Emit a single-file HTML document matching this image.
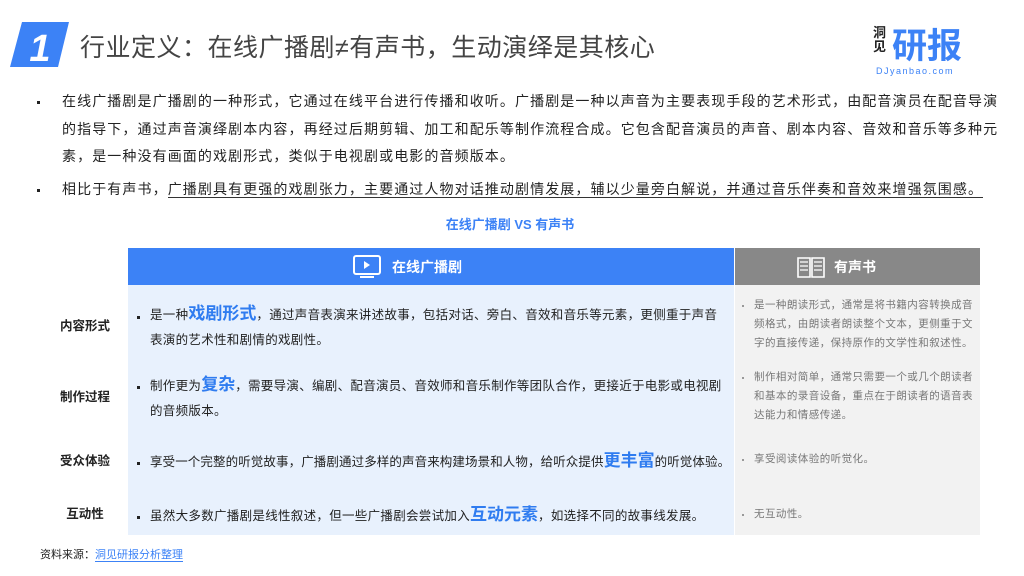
<!DOCTYPE html>
<html><head><meta charset="utf-8"><style>
*{margin:0;padding:0;box-sizing:border-box}
body{width:1024px;height:576px;background:#fff;position:relative;overflow:hidden;font-family:"Liberation Sans","Noto Sans CJK SC",sans-serif;color:#222}
.a{position:absolute;white-space:nowrap}
.p{position:absolute;left:62px;font-size:14px;line-height:27.5px;color:#222;white-space:nowrap;letter-spacing:1.1px}
.dot{position:absolute;left:37px;width:3px;height:3px;background:#222}
.lab{position:absolute;left:40px;width:90px;text-align:center;font-size:12.5px;font-weight:bold;color:#222}
.bt{position:absolute;left:150px;font-size:12.5px;line-height:24.5px;color:#222;white-space:nowrap;letter-spacing:0.3px}
.bt b{color:#2f7cf0;font-size:17px;font-weight:bold;letter-spacing:0}
.gt{position:absolute;left:754px;font-size:10.5px;line-height:19px;color:#777;white-space:nowrap;letter-spacing:0.45px}
.sd{position:absolute;width:3px;height:3px;background:#222}
.gd{position:absolute;left:742px;width:2px;height:2px;background:#999}
</style></head><body>
<svg class="a" style="left:8px;top:21px" width="62" height="48"><polygon points="14,1 61,1 50,46 2,46" fill="#3c82f6"/><text x="32" y="40" font-size="38" font-weight="bold" font-style="italic" fill="#fff" text-anchor="middle" font-family="Liberation Sans">1</text></svg>
<div class="a" style="left:80px;top:28px;font-size:25px;color:#444;letter-spacing:0.5px">行业定义：在线广播剧≠有声书，生动演绎是其核心</div>
<div class="a" style="left:873px;top:26px;font-size:13px;line-height:14px;font-weight:bold;color:#222;width:14px">洞<br>见</div>
<div class="a" style="left:892px;top:18px;font-size:35px;font-weight:bold;color:#3c82f6">研报</div>
<div class="a" style="left:876px;top:66px;font-size:9px;color:#3c82f6;letter-spacing:1.5px">DJyanbao.com</div>

<div class="dot" style="top:101px"></div>
<div class="p" style="top:88px">在线广播剧是广播剧的一种形式，它通过在线平台进行传播和收听。广播剧是一种以声音为主要表现手段的艺术形式，由配音演员在配音导演<br>的指导下，通过声音演绎剧本内容，再经过后期剪辑、加工和配乐等制作流程合成。它包含配音演员的声音、剧本内容、音效和音乐等多种元<br>素，是一种没有画面的戏剧形式，类似于电视剧或电影的音频版本。</div>
<div class="dot" style="top:189px"></div>
<div class="p" style="top:176px">相比于有声书，<span style="border-bottom:1.5px solid #333">广播剧具有更强的戏剧张力，主要通过人物对话推动剧情发展，辅以少量旁白解说，并通过音乐伴奏和音效来增强氛围感。</span></div>

<div class="a" style="left:0;width:1020px;text-align:center;top:214px;font-size:13px;font-weight:bold;color:#3c82f6">在线广播剧 VS 有声书</div>

<div class="a" style="left:128px;top:248px;width:606px;height:37px;background:#3c82f6"></div>
<div class="a" style="left:735px;top:248px;width:245px;height:37px;background:#888"></div>
<div class="a" style="left:128px;top:285px;width:606px;height:250px;background:#e8f1fd"></div>
<div class="a" style="left:735px;top:285px;width:245px;height:250px;background:#f2f2f2"></div>
<svg class="a" style="left:352px;top:255px" width="30" height="24"><rect x="2" y="1" width="26" height="18" rx="2" fill="none" stroke="#fff" stroke-width="2"/><polygon points="12,6 12,14 18,10" fill="#fff"/><line x1="8" y1="22" x2="22" y2="22" stroke="#fff" stroke-width="2"/></svg>
<div class="a" style="left:392px;top:257px;font-size:14px;font-weight:bold;color:#fff">在线广播剧</div>
<svg class="a" style="left:796px;top:255px" width="30" height="24"><path d="M2 3h12v19H2zM16 3h12v19H16z" fill="none" stroke="#fff" stroke-width="1.6"/><path d="M4 7h8M4 11h8M4 15h8M18 7h8M18 11h8M18 15h8" stroke="#fff" stroke-width="1.2"/></svg>
<div class="a" style="left:834px;top:257px;font-size:14px;font-weight:bold;color:#fff">有声书</div>

<div class="lab" style="top:315px">内容形式</div>
<div class="lab" style="top:386px">制作过程</div>
<div class="lab" style="top:450px">受众体验</div>
<div class="lab" style="top:503px">互动性</div>

<div class="sd" style="left:137px;top:316px"></div>
<div class="bt" style="top:302px">是一种<b>戏剧形式</b>，通过声音表演来讲述故事，包括对话、旁白、音效和音乐等元素，更侧重于声音<br>表演的艺术性和剧情的戏剧性。</div>
<div class="sd" style="left:137px;top:386px"></div>
<div class="bt" style="top:373px">制作更为<b>复杂</b>，需要导演、编剧、配音演员、音效师和音乐制作等团队合作，更接近于电影或电视剧<br>的音频版本。</div>
<div class="sd" style="left:137px;top:462px"></div>
<div class="bt" style="top:449px;letter-spacing:0.1px">享受一个完整的听觉故事，广播剧通过多样的声音来构建场景和人物，给听众提供<b>更丰富</b>的听觉体验。</div>
<div class="sd" style="left:137px;top:516px"></div>
<div class="bt" style="top:503px">虽然大多数广播剧是线性叙述，但一些广播剧会尝试加入<b>互动元素</b>，如选择不同的故事线发展。</div>

<div class="gd" style="top:305px"></div>
<div class="gt" style="top:296px">是一种朗读形式，通常是将书籍内容转换成音<br>频格式，由朗读者朗读整个文本，更侧重于文<br>字的直接传递，保持原作的文学性和叙述性。</div>
<div class="gd" style="top:377px"></div>
<div class="gt" style="top:368px">制作相对简单，通常只需要一个或几个朗读者<br>和基本的录音设备，重点在于朗读者的语音表<br>达能力和情感传递。</div>
<div class="gd" style="top:459px"></div>
<div class="gt" style="top:450px">享受阅读体验的听觉化。</div>
<div class="gd" style="top:514px"></div>
<div class="gt" style="top:505px">无互动性。</div>

<div class="a" style="left:40px;top:546px;font-size:11px;color:#222">资料来源：<span style="color:#3c82f6;border-bottom:1px solid #3c82f6">洞见研报分析整理</span></div>
</body></html>
